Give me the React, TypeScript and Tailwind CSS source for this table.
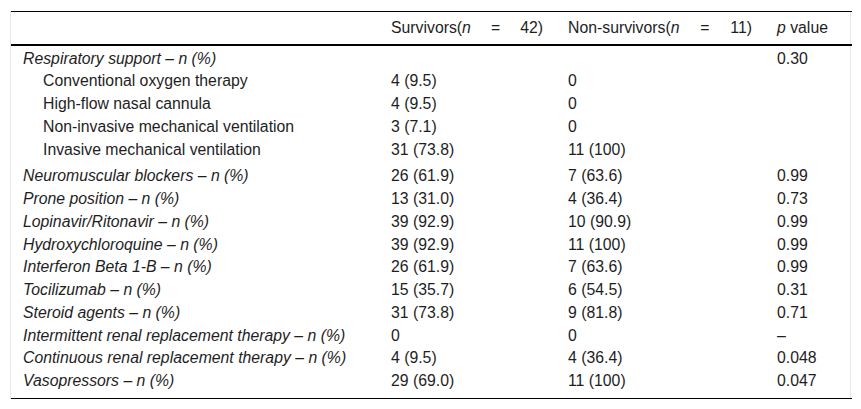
const rows: { label: string; s: string; ns: string; p: string; indent?: boolean; extra?: string }[] = [
  { label: 'Conventional oxygen therapy', s: '4 (9.5)', ns: '0', p: '', indent: true },
  { label: 'High-flow nasal cannula', s: '4 (9.5)', ns: '0', p: '', indent: true },
  { label: 'Non-invasive mechanical ventilation', s: '3 (7.1)', ns: '0', p: '', indent: true },
  { label: 'Invasive mechanical ventilation', s: '31 (73.8)', ns: '11 (100)', p: '', indent: true },
];

const drugs = [
  { label: 'Neuromuscular blockers', s: '26 (61.9)', ns: '7 (63.6)', p: '0.99' },
  { label: 'Prone position', s: '13 (31.0)', ns: '4 (36.4)', p: '0.73' },
  { label: 'Lopinavir/Ritonavir', s: '39 (92.9)', ns: '10 (90.9)', p: '0.99' },
  { label: 'Hydroxychloroquine', s: '39 (92.9)', ns: '11 (100)', p: '0.99' },
  { label: 'Interferon Beta 1-B', s: '26 (61.9)', ns: '7 (63.6)', p: '0.99' },
  { label: 'Tocilizumab', s: '15 (35.7)', ns: '6 (54.5)', p: '0.31' },
  { label: 'Steroid agents', s: '31 (73.8)', ns: '9 (81.8)', p: '0.71' },
  { label: 'Intermittent renal replacement therapy', s: '0', ns: '0', p: '\u2013' },
  { label: 'Continuous renal replacement therapy', s: '4 (9.5)', ns: '4 (36.4)', p: '0.048' },
  { label: 'Vasopressors', s: '29 (69.0)', ns: '11 (100)', p: '0.047' },
];

export default function App() {
  return (
    <div className="w-[861px] h-[409px] bg-white pt-[11px] pl-[10px] text-[15.8px] text-[#1e1e1e]" style={{ fontFamily: '"Liberation Sans", Arial, sans-serif' }}>
      <div className="w-[841px] border-x border-[#e6e6e6]">
        <table className="w-full border-collapse table-fixed">
          <colgroup>
            <col className="w-[380px]" />
            <col className="w-[177px]" />
            <col className="w-[209px]" />
            <col className="w-[75px]" />
          </colgroup>
          <thead>
            <tr className="h-[33px] border-t border-black border-b-2 border-b-black">
              <th />
              <th className="text-left font-normal">
                <div className="flex justify-between w-[152px]">
                  <span>Survivors(<i>n</i></span>
                  <span>=</span>
                  <span>42)</span>
                </div>
              </th>
              <th className="text-left font-normal">
                <div className="flex justify-between w-[184px]">
                  <span>Non-survivors(<i>n</i></span>
                  <span>=</span>
                  <span>11)</span>
                </div>
              </th>
              <th className="text-left font-normal">
                <i>p</i> value
              </th>
            </tr>
          </thead>
          <tbody className="leading-[22.75px]">
            <tr>
              <td className="pl-3 pt-[2px] italic">Respiratory support – n (%)</td>
              <td className="pt-[2px]" />
              <td className="pt-[2px]" />
              <td className="pt-[2px]">0.30</td>
            </tr>
            {rows.map((r, i) => (
              <tr key={r.label}>
                <td className={`pl-8 ${i === rows.length - 1 ? 'pb-[4px]' : ''}`}>{r.label}</td>
                <td className={i === rows.length - 1 ? 'pb-[4px]' : ''}>{r.s}</td>
                <td className={i === rows.length - 1 ? 'pb-[4px]' : ''}>{r.ns}</td>
                <td>{r.p}</td>
              </tr>
            ))}
            {drugs.map((r, i) => (
              <tr key={r.label} className={i === drugs.length - 1 ? 'border-b border-black' : ''}>
                <td className={`pl-3 italic ${i === drugs.length - 1 ? 'pb-[5px]' : ''}`}>{r.label} – n (%)</td>
                <td className={i === drugs.length - 1 ? 'pb-[5px]' : ''}>{r.s}</td>
                <td className={i === drugs.length - 1 ? 'pb-[5px]' : ''}>{r.ns}</td>
                <td className={i === drugs.length - 1 ? 'pb-[5px]' : ''}>{r.p}</td>
              </tr>
            ))}
          </tbody>
        </table>
      </div>
    </div>
  );
}
